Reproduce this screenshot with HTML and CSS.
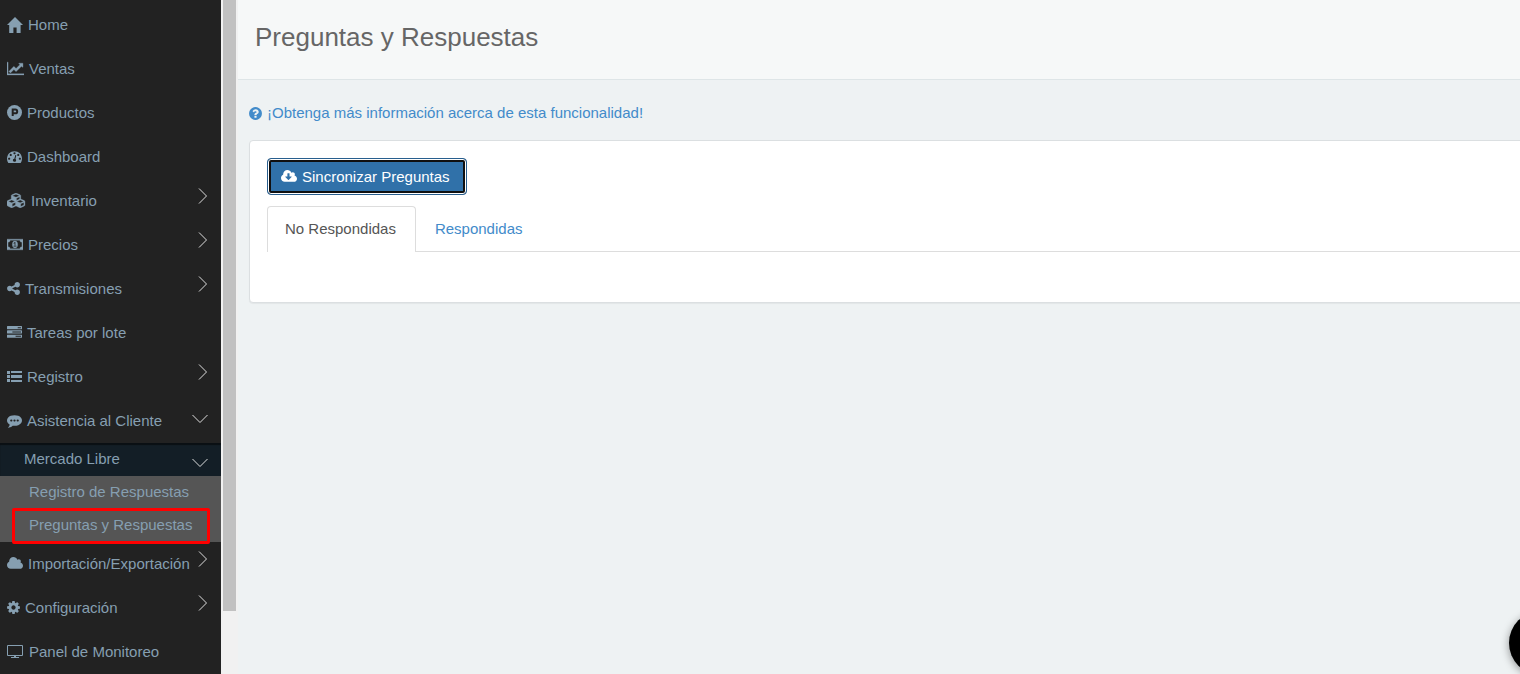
FILE: index.html
```html
<!DOCTYPE html>
<html lang="es">
<head>
  <meta charset="utf-8">
  <title>Preguntas y Respuestas</title>
  <link rel="stylesheet" href="styles.css">
</head>
<body>
  <div class="app">
    <nav class="sidebar">
      <ul class="menu">
        <li><a href="#"><svg class="icon" viewBox="0 0 16 16" width="16" height="16"><path d="M8 0L16 8H13.600V16H9.600V10.500H6.400V16H2.200V8H0z"/></svg>Home</a></li>
        <li><a href="#"><svg class="icon bold" viewBox="0 0 2048 1792" width="17" height="15"><path d="M2048 1536v128h-2048v-1536h128v1408h1920zm-128-1248v435q0 21-19.500 29.500t-35.500-7.500l-121-121-633 633q-10 10-23 10t-23-10l-233-233-416 416-192-192 585-585q10-10 23-10t23 10l233 233 464-464-121-121q-16-16-7.500-35.500t29.500-19.500h435q14 0 23 9t9 23z"/></svg>Ventas</a></li>
        <li><a href="#"><svg class="icon" viewBox="0 0 15 15" width="15" height="15"><circle cx="7.500" cy="7.500" r="7.500"/><path class="cut" d="M5.700 11V4.500H8.300A1.700 1.700 0 0 1 8.300 8.300H5.700"/></svg>Productos</a></li>
        <li><a href="#"><svg class="icon" viewBox="0 0 1792 1792" width="15" height="15"><path d="M384 1152q0-53-37.500-90.500t-90.500-37.500-90.500 37.500-37.500 90.500 37.500 90.500 90.500 37.500 90.500-37.500 37.500-90.500zm192-448q0-53-37.500-90.500t-90.500-37.500-90.500 37.500-37.500 90.500 37.500 90.500 90.500 37.500 90.500-37.500 37.500-90.500zm428 481l101-382q6-26-7.500-48.500t-38.500-29.500-48 6.500-30 39.500l-101 382q-60 5-107 43.500t-63 98.500q-20 77 20 146t117 89 146-20 89-117q16-60-6-117t-72-91zm660-33q0-53-37.500-90.500t-90.500-37.500-90.500 37.500-37.500 90.500 37.500 90.500 90.500 37.500 90.500-37.500 37.500-90.500zm-640-640q0-53-37.500-90.500t-90.500-37.500-90.500 37.500-37.500 90.500 37.500 90.500 90.500 37.500 90.500-37.500 37.500-90.500zm448 192q0-53-37.500-90.500t-90.500-37.500-90.500 37.500-37.500 90.500 37.500 90.500 90.500 37.500 90.500-37.500 37.500-90.500zm320 448q0 261-141 483-19 29-54 29h-1402q-35 0-54-29-141-221-141-483 0-182 71-348t191-286 286-191 348-71 348 71 286 191 191 286 71 348z"/></svg>Dashboard</a></li>
        <li><a href="#"><svg class="icon bold" viewBox="0 0 2304 1792" width="19" height="15"><path d="M640 1632l384-192v-314l-384 164v342zm-64-454l404-173-404-173-404 173zm1088 454l384-192v-314l-384 164v342zm-64-454l404-173-404-173-404 173zm-448-293l384-165v-266l-384 164v267zm-64-379l441-189-441-189-441 189zm1088 518v416q0 36-19 67t-52 47l-448 224q-25 14-57 14t-57-14l-448-224q-4-2-7-4-2 2-7 4l-448 224q-25 14-57 14t-57-14l-448-224q-33-16-52-47t-19-67v-416q0-38 21.500-70t56.500-48l434-186v-400q0-38 21.500-70t56.500-48l448-192q23-10 50-10t50 10l448 192q35 16 56.500 48t21.500 70v400l434 186q36 16 57 48t21 70z"/></svg>Inventario
          <svg class="arrow" viewBox="0 0 16 16" width="16" height="16"><path d="M7 .5L14.500 8L7 15.500"/></svg></a></li>
        <li><a href="#"><svg class="icon bold" viewBox="0 0 1920 1792" width="16" height="15"><path fill-rule="evenodd" d="M0 256H1920V1536H0zM128 640V1152A256 256 0 0 1 384 1408H1536A256 256 0 0 1 1792 1152V640A256 256 0 0 1 1536 384H384A256 256 0 0 1 128 640zM960 480A320 416 0 0 1 960 1312A320 416 0 0 1 960 480zM768 1152H1152V1056H1024V608H910L762 745L839 825L896 775V1056H768z"/></svg>Precios
          <svg class="arrow" viewBox="0 0 16 16" width="16" height="16"><path d="M7 .5L14.500 8L7 15.500"/></svg></a></li>
        <li><a href="#"><svg class="icon" viewBox="0 0 1536 1792" width="13" height="15"><path d="M1216 1024q133 0 226.500 93.500t93.500 226.500-93.500 226.500-226.500 93.500-226.500-93.500-93.500-226.500q0-12 2-34l-360-180q-92 86-218 86-133 0-226.500-93.500t-93.500-226.500 93.500-226.500 226.500-93.500q126 0 218 86l360-180q-2-22-2-34 0-133 93.500-226.500t226.500-93.500 226.500 93.500 93.500 226.500-93.500 226.500-226.500 93.500q-126 0-218-86l-360 180q2 22 2 34t-2 34l360 180q92-86 218-86z"/></svg>Transmisiones
          <svg class="arrow" viewBox="0 0 16 16" width="16" height="16"><path d="M7 .5L14.500 8L7 15.500"/></svg></a></li>
        <li><a href="#"><svg class="icon" viewBox="0 0 1792 1792" width="15" height="15"><path d="M1024 1408h640v-128h-640v128zm-384-512h1024v-128h-1024v128zm640-512h384v-128h-384v128zm512 832v256q0 26-19 45t-45 19h-1664q-26 0-45-19t-19-45v-256q0-26 19-45t45-19h1664q26 0 45 19t19 45zm0-512v256q0 26-19 45t-45 19h-1664q-26 0-45-19t-19-45v-256q0-26 19-45t45-19h1664q26 0 45 19t19 45zm0-512v256q0 26-19 45t-45 19h-1664q-26 0-45-19t-19-45v-256q0-26 19-45t45-19h1664q26 0 45 19t19 45z"/></svg>Tareas por lote</a></li>
        <li><a href="#"><svg class="icon" viewBox="0 0 15 15" width="15" height="15"><path d="M0 2H3V5H0zM0 6H3V9H0zM0 10H3V13H0zM4 2H15V4H4zM4 6H15V9H4zM4 11H15V13H4z"/></svg>Registro
          <svg class="arrow" viewBox="0 0 16 16" width="16" height="16"><path d="M7 .5L14.500 8L7 15.500"/></svg></a></li>
        <li>
          <a href="#"><svg class="icon" viewBox="0 0 1792 1792" width="15" height="15"><path d="M640 896q0-53-37.500-90.500t-90.500-37.500-90.500 37.500-37.500 90.500 37.500 90.500 90.500 37.500 90.500-37.500 37.500-90.500zm384 0q0-53-37.500-90.500t-90.500-37.500-90.500 37.500-37.500 90.500 37.500 90.500 90.500 37.500 90.500-37.500 37.500-90.500zm384 0q0-53-37.500-90.500t-90.500-37.500-90.500 37.500-37.500 90.500 37.500 90.500 90.500 37.500 90.500-37.500 37.500-90.500zm384 0q0 174-120 321.500t-326 233-450 85.500q-110 0-211-18-173 173-435 229-52 10-86 13-12 1-22-6t-13-18q-4-15 20-37 5-5 23.500-21.500t25.500-23.500 23.500-25.500 24-31.500 20.500-37 20-48 14.500-57.500 12.500-72.500q-146-90-229.500-216.500t-83.500-269.500q0-174 120-321.500t326-233 450-85.500 450 85.500 326 233 120 321.500z"/></svg>Asistencia al Cliente
            <svg class="arrow down" viewBox="0 0 16 16" width="16" height="16"><path d="M.5 4L8 11.500L15.500 4"/></svg></a>
          <ul class="submenu">
            <li>
              <a class="group" href="#">Mercado Libre
                <svg class="arrow down" viewBox="0 0 16 16" width="16" height="16"><path d="M.5 4L8 11.500L15.500 4"/></svg></a>
              <ul class="pages">
                <li><a href="#">Registro de Respuestas</a></li>
                <li><a class="current" href="#">Preguntas y Respuestas</a></li>
              </ul>
            </li>
          </ul>
        </li>
        <li><a href="#"><svg class="icon" viewBox="0 0 1920 1792" width="16" height="15"><path d="M1920 1152q0 159-112.500 271.500t-271.500 112.500h-1088q-185 0-316.500-131.500t-131.500-316.500q0-132 71-241.500t187-163.500q-2-28-2-43 0-212 150-362t362-150q158 0 286.500 88t187.500 230q70-62 166-62 106 0 181 75t75 181q0 75-41 138 129 30 213 134.500t84 239.500z"/></svg>Importación/Exportación
          <svg class="arrow" viewBox="0 0 16 16" width="16" height="16"><path d="M7 .5L14.500 8L7 15.500"/></svg></a></li>
        <li><a href="#"><svg class="icon" viewBox="128 0 1536 1792" width="13" height="15"><path d="M1152 896q0-106-75-181t-181-75-181 75-75 181 75 181 181 75 181-75 75-181zm512-109v222q0 12-8 23t-20 13l-185 28q-19 54-39 91 35 50 107 138 10 12 10 25t-9 23q-27 37-99 108t-94 71q-12 0-26-9l-138-108q-44 23-91 38-16 136-29 186-7 28-36 28h-222q-14 0-24.500-8.500t-11.500-21.500l-28-184q-49-16-90-37l-141 107q-10 9-25 9-14 0-25-11-126-114-165-168-7-10-7-23 0-12 8-23 15-21 51-66.500t54-70.500q-27-50-41-99l-183-27q-13-2-21-12.500t-8-23.500v-222q0-12 8-23t19-13l186-28q14-46 39-92-40-57-107-138-10-12-10-24 0-10 9-23 26-36 98.500-107.500t94.500-71.500q13 0 26 10l138 107q44-23 91-38 16-136 29-186 7-28 36-28h222q14 0 24.500 8.500t11.500 21.500l28 184q49 16 90 37l142-107q9-9 24-9 13 0 25 10 129 119 165 170 7 8 7 22 0 12-8 23-15 21-51 66.500t-54 70.500q26 50 41 98l183 28q13 2 21 12.500t8 23.500z"/></svg>Configuración
          <svg class="arrow" viewBox="0 0 16 16" width="16" height="16"><path d="M7 .5L14.500 8L7 15.500"/></svg></a></li>
        <li><a href="#"><svg class="icon" viewBox="0 0 17 15" width="17" height="15"><path fill-rule="evenodd" d="M1 1H15Q16 1 16 2V11Q16 12 15 12H9V13H12V14H4V13H7V12H1Q0 12 0 11V2Q0 1 1 1zM1 2V11H15V2z"/></svg>Panel de Monitoreo</a></li>
      </ul>
    </nav>
    <div class="scrollbar"><div class="thumb"></div></div>

    <main class="content">
      <header class="page-header">
        <h1>Preguntas y Respuestas</h1>
      </header>
      <div class="wrapper">
        <a class="help" href="#"><svg class="icon" viewBox="128 0 1536 1792" width="13" height="15"><path d="M1024 1376v-192q0-14-9-23t-23-9h-192q-14 0-23 9t-9 23v192q0 14 9 23t23 9h192q14 0 23-9t9-23zm256-672q0-88-55.500-163t-138.500-116-170-41q-243 0-371 213-15 24 8 42l132 100q7 6 19 6 16 0 25-12 53-68 86-92 34-24 86-24 48 0 85.500 26t37.500 59q0 38-20 61t-68 45q-63 28-115.500 86.500t-52.500 125.500v36q0 14 9 23t23 9h192q14 0 23-9t9-23q0-19 21.500-49.500t54.500-49.500q32-18 49-28.500t46-35 44.500-48 28-60.500 12.500-81zm384 192q0 209-103 385.500t-279.500 279.500-385.500 103-385.500-103-279.500-279.500-103-385.500 103-385.500 279.500-279.500 385.500-103 385.500 103 279.500 279.500 103 385.500z"/></svg>¡Obtenga más información acerca de esta funcionalidad!</a>
        <section class="panel">
          <button class="btn" type="button"><svg class="icon" viewBox="0 0 1920 1792" width="16" height="15"><path d="M1280 928q0-14-9-23t-23-9h-224v-352q0-13-9.500-22.500t-22.500-9.500h-192q-13 0-22.500 9.500t-9.500 22.500v352h-224q-13 0-22.500 9.500t-9.500 22.500q0 14 9 23l352 352q9 9 23 9t23-9l351-351q10-12 10-24zm640 224q0 159-112.500 271.500t-271.500 112.500h-1088q-185 0-316.500-131.500t-131.500-316.500q0-130 70-240t188-165q-2-30-2-43 0-212 150-362t362-150q156 0 285.500 87t188.500 231q71-62 166-62 106 0 181 75t75 181q0 76-41 138 130 31 213.500 135.500t83.500 238.500z"/></svg>Sincronizar Preguntas</button>
          <ul class="tabs">
            <li><a class="active" href="#">No Respondidas</a></li>
            <li><a href="#">Respondidas</a></li>
          </ul>
          <div class="tab-content"></div>
        </section>
      </div>
    </main>
  </div>
  <button class="chat" type="button" aria-label="Chat"></button>
</body>
</html>
```

FILE: styles.css
```css
* {
  box-sizing: border-box;
}
body {
  margin: 0;
  background-color: #eef2f3;
  color: #58666e;
  font-family: "Liberation Sans", Arial, sans-serif;
  font-size: 15px;
  line-height: 20px;
}
a {
  color: #428bca;
  text-decoration: none;
}
ul {
  list-style: none;
  margin: 0;
  padding: 0;
}
.icon {
  flex: none;
  margin-right: 5px;
  fill: currentColor;
}
.icon.bold {
  stroke: currentColor;
  stroke-width: 40;
}
.app {
  display: flex;
  min-height: 100vh;
  overflow: hidden;
}

/* sidebar */
.sidebar {
  flex: none;
  width: 221px;
  background-color: #222;
}
.menu {
  padding-top: 3px;
}
.menu a {
  display: flex;
  align-items: center;
  height: 44px;
  padding: 0 13px 0 7px;
  color: #869fb1;
  white-space: nowrap;
}
.menu .icon {
  margin-bottom: 1px;
}
.icon .cut {
  fill: none;
  stroke: #222;
  stroke-width: 2;
}
.arrow {
  flex: none;
  align-self: flex-start;
  margin: 9px 0 0 auto;
  fill: none;
  stroke: #ddd;
}
.arrow.down {
  margin-top: 12px;
}
.menu .group {
  height: 33px;
  padding-bottom: 2px;
  padding-left: 24px;
  background-color: #131e26;
  box-shadow: inset 0 2px 1px #0a0f13;
}
.pages {
  background-color: #555;
}
.menu .pages a {
  height: 33px;
  padding-bottom: 2px;
  padding-left: 29px;
}
.menu .current {
  position: relative;
}
.current::after {
  content: "";
  position: absolute;
  top: -1px;
  right: 11px;
  bottom: -2px;
  left: 12px;
  border: 3px solid #f00;
  border-radius: 2px;
}
.scrollbar {
  flex: none;
  width: 17px;
  padding: 0 2px;
  background-color: #f1f1f1;
}
.thumb {
  height: calc(100vh - 63px);
  background-color: #c1c1c1;
}

/* content */
.content {
  flex: 1;
  min-width: 0;
}
.page-header {
  padding: 20px 17px 24px;
  border-bottom: 1px solid #dee5e7;
  background-color: #f6f8f8;
}
h1 {
  margin: 0;
  color: #666;
  font-size: 26px;
  font-weight: normal;
  line-height: 35px;
}
.wrapper {
  padding: 23px 0 0 11px;
}
.help {
  display: flex;
  align-items: center;
}
/* the panel runs past the right edge of the window */
.panel {
  margin: 17px -20px 0 0;
  padding: 17px;
  border: 1px solid #dbdfe1;
  border-radius: 4px;
  background-color: #fff;
  box-shadow: 0 1px 1px rgba(0, 0, 0, .05);
}
.btn {
  display: flex;
  align-items: center;
  height: 37px;
  padding: 0 16px 0 13px;
  border: 1px solid #285e8e;
  border-radius: 4px;
  background-color: #3071a9;
  box-shadow: inset 0 0 0 1px #fff, inset 0 0 0 3px #101010;
  color: #fff;
  font: inherit;
}
.tabs {
  display: flex;
  gap: 1px;
  margin-top: 11px;
  border-bottom: 1px solid #ddd;
}
.tabs a {
  display: block;
  margin-bottom: -1px;
  padding: 12px 19px 13px 17px;
  border: 1px solid transparent;
  border-bottom: 0;
  border-radius: 4px 4px 0 0;
}
.tabs .active {
  border-color: #ddd;
  background-color: #fff;
  color: #555;
}
.tab-content {
  height: 33px;
}
.chat {
  position: fixed;
  right: -53px;
  bottom: -1px;
  width: 64px;
  height: 64px;
  padding: 0;
  border: 0;
  border-radius: 50%;
  background-color: #000;
  box-shadow: 0 2px 8px rgba(0, 0, 0, .4);
}
```
